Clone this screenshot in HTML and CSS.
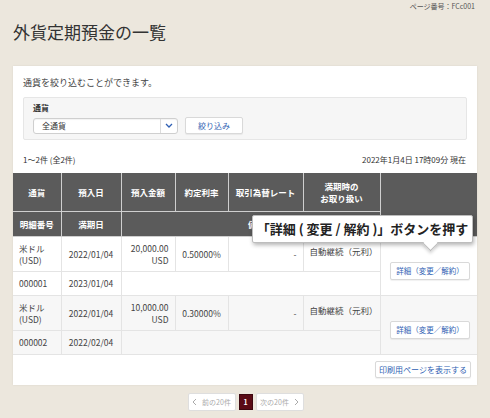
FILE: index.html
```html
<!DOCTYPE html>
<html lang="ja">
  <head>
    <meta charset="UTF-8" />
    <title>外貨定期預金の一覧</title>
    <link rel="stylesheet" href="styles.css">
  </head>
  <body>
    <div class="page-no">ページ番号：FCc001</div>
    <h1 class="title">外貨定期預金の一覧</h1>

    <main class="card">
      <p class="lead">通貨を絞り込むことができます。</p>

      <div class="filter">
        <div class="filter-label">通貨</div>
        <div class="filter-row">
          <div class="select">
            <span class="select-value">全通貨</span>
            <span class="select-arrow">
              <svg width="8" height="5" viewBox="0 0 8 5"><path d="M1 1 L4 4 L7 1" fill="none" stroke="#2f5fb3" stroke-width="1.3"/></svg>
            </span>
          </div>
          <button class="btn">絞り込み</button>
        </div>
      </div>

      <div class="meta">
        <span>1～2件 (全2件)</span>
        <span>2022年1月4日 17時09分 現在</span>
      </div>

      <table class="list">
        <colgroup>
          <col style="width:48px"><col style="width:60px"><col style="width:54px"><col style="width:53px"><col style="width:75px"><col style="width:77px"><col>
        </colgroup>
        <thead>
          <tr class="head1">
            <th>通貨</th>
            <th>預入日</th>
            <th>預入金額</th>
            <th>約定利率</th>
            <th>取引為替レート</th>
            <th>満期時の<br>お取り扱い</th>
            <th rowspan="2"></th>
          </tr>
          <tr class="head2">
            <th>明細番号</th>
            <th>満期日</th>
            <th colspan="4" class="note">備考</th>
          </tr>
        </thead>
        <tbody>
          <tr class="row-a">
            <td class="left">米ドル<br>(USD)</td>
            <td>2022/01/04</td>
            <td class="right">20,000.00<br>USD</td>
            <td>0.50000%</td>
            <td class="right">-</td>
            <td class="left top">自動継続（元利）</td>
            <td rowspan="2" class="action"><button class="btn btn-detail">詳細（変更／解約）</button></td>
          </tr>
          <tr class="row-b">
            <td class="left">000001</td>
            <td>2023/01/04</td>
            <td colspan="4"></td>
          </tr>
          <tr class="row-a odd">
            <td class="left">米ドル<br>(USD)</td>
            <td>2022/01/04</td>
            <td class="right">10,000.00<br>USD</td>
            <td>0.30000%</td>
            <td class="right">-</td>
            <td class="left top">自動継続（元利）</td>
            <td rowspan="2" class="action"><button class="btn btn-detail">詳細（変更／解約）</button></td>
          </tr>
          <tr class="row-b odd">
            <td class="left">000002</td>
            <td>2022/02/04</td>
            <td colspan="4"></td>
          </tr>
        </tbody>
      </table>

      <div class="print">
        <button class="btn">印刷用ページを表示する</button>
      </div>

      <div class="tooltip">「詳細 ( 変更 / 解約 )」ボタンを押す</div>
    </main>

    <nav class="pager">
      <span class="pager-btn disabled">
        <svg width="5" height="8" viewBox="0 0 5 8"><path d="M4 1 L1 4 L4 7" fill="none" stroke="#aaa" stroke-width="1"/></svg>
        前の20件
      </span>
      <span class="pager-current">1</span>
      <span class="pager-btn disabled">
        次の20件
        <svg width="5" height="8" viewBox="0 0 5 8"><path d="M1 1 L4 4 L1 7" fill="none" stroke="#aaa" stroke-width="1"/></svg>
      </span>
    </nav>
  </body>
</html>
```

FILE: styles.css
```css
body {
  font-family: "Noto Sans CJK JP", "Noto Sans", sans-serif;
  background-color: #ece7dd;
  color: #444;
  margin: 0;
  padding: 0 13px;
}

.page-no {
  font-size: 7px;
  color: #555;
  text-align: right;
  padding: 2px 2px 0 0;
  line-height: 9px;
}

.title {
  font-size: 17px;
  font-weight: normal;
  color: #333;
  margin: 10px 0 0;
  line-height: 22px;
}

.card {
  position: relative;
  background-color: white;
  margin-top: 23px;
  padding: 10px 10px 7px;
  box-shadow: 0 0 2px rgba(0, 0, 0, 0.08);
}

.lead {
  font-size: 9px;
  line-height: 13px;
  margin: 0 0 8px;
  color: #444;
}

.filter {
  background-color: #f6f6f6;
  border: 1px solid #e6e6e6;
  border-radius: 2px;
  padding: 4px 9px 5px;
}

.filter-label {
  font-size: 8px;
  font-weight: bold;
  line-height: 12px;
  color: #333;
  margin-bottom: 3px;
}

.filter-row {
  display: flex;
  align-items: center;
  gap: 7px;
}

.select {
  display: flex;
  align-items: center;
  width: 143px;
  height: 14px;
  background-color: white;
  border: 1px solid #cfcfcf;
  border-radius: 3px;
  box-shadow: inset 0 1px 1px rgba(0, 0, 0, 0.05);
}

.select-value {
  flex: 1;
  font-size: 8px;
  padding-left: 8px;
  color: #333;
}

.select-arrow {
  width: 16px;
  height: 14px;
  border-left: 1px solid #dcdcdc;
  display: flex;
  align-items: center;
  justify-content: center;
}

.btn {
  font-family: inherit;
  background-color: white;
  color: #2f5fb3;
  border: 1px solid #d9d9d9;
  border-radius: 2px;
  box-shadow: 0 1px 1px rgba(0, 0, 0, 0.06);
  cursor: pointer;
  padding: 0;
}

.filter .btn {
  width: 58px;
  height: 17px;
  font-size: 8px;
}

.meta {
  display: flex;
  justify-content: space-between;
  font-size: 8px;
  line-height: 12px;
  margin: 14px 0 7px;
  padding-right: 1px;
  color: #333;
}

.list {
  width: calc(100% + 20px);
  margin: 0 -10px;
  border-collapse: collapse;
  table-layout: fixed;
  font-size: 8.5px;
}

.list th {
  background-color: #5b5b5b;
  color: white;
  font-weight: bold;
  font-size: 8.5px;
  border: 1px solid #cfcfcf;
  line-height: 12px;
  padding: 0 2px;
}

.list thead tr:first-child th {
  border-top: none;
}

.list th:first-child {
  border-left: none;
}

.list th[rowspan] {
  border-right: none;
}

.list th.note {
  text-indent: 12px;
}

.head1 {
  height: 38px;
}

.head2 {
  height: 25px;
}

.list td {
  border: 1px solid #e4e4e4;
  text-align: center;
  line-height: 12px;
  padding: 0 6px;
  color: #444;
}

.list td:first-child {
  border-left: none;
}

.list td.action {
  border-right: none;
  text-align: right;
  padding: 10px 7px 0;
}

.list td.left {
  text-align: left;
}

.list td.right {
  text-align: right;
}

.list td.top {
  padding-bottom: 5px;
}

.row-a {
  height: 35px;
}

.row-b {
  height: 24px;
}

.odd td {
  background-color: #f7f7f7;
}

.btn-detail {
  width: 80px;
  height: 18px;
  font-size: 7.5px;
}

.print {
  display: flex;
  justify-content: flex-end;
  margin: 6px -4px 0 0;
}

.print .btn {
  width: 96px;
  height: 17px;
  font-size: 8px;
}

.tooltip {
  position: absolute;
  left: 239px;
  top: 149px;
  width: 221px;
  height: 28px;
  box-sizing: border-box;
  background-color: white;
  border: 1px solid #bdbdbd;
  border-radius: 2px;
  box-shadow: 1px 2px 4px rgba(0, 0, 0, 0.3);
  font-size: 13px;
  font-weight: bold;
  color: #222;
  line-height: 26px;
  text-align: center;
  white-space: nowrap;
}

.tooltip::after {
  content: "";
  position: absolute;
  left: 172px;
  bottom: -7px;
  width: 10px;
  height: 10px;
  background-color: white;
  border-right: 1px solid #bdbdbd;
  border-bottom: 1px solid #bdbdbd;
  transform: rotate(45deg);
  box-shadow: 2px 2px 3px rgba(0, 0, 0, 0.15);
}

.pager {
  display: flex;
  justify-content: center;
  align-items: center;
  gap: 3px;
  margin-top: 8px;
  padding-left: 1px;
}

.pager-btn {
  display: flex;
  align-items: center;
  justify-content: center;
  gap: 5px;
  width: 46px;
  height: 16px;
  background-color: white;
  border: 1px solid #dedede;
  border-radius: 2px;
  font-size: 7px;
  color: #aaa;
}

.pager-current {
  display: flex;
  align-items: center;
  justify-content: center;
  width: 14px;
  height: 16px;
  background-color: #5a0b16;
  color: white;
  font-size: 7px;
  font-weight: bold;
  border: 1px solid #3d0710;
  box-sizing: border-box;
}
```
